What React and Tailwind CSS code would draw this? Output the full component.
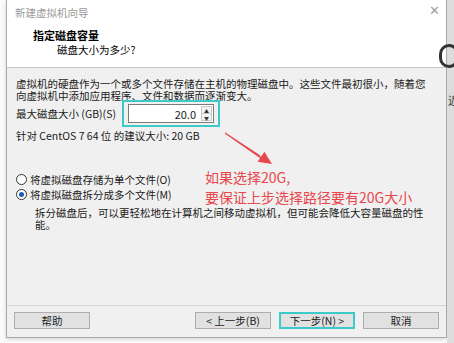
import React from 'react';

const font = { fontFamily: '"Noto Sans CJK SC", "Noto Sans", sans-serif' };

const Radio = ({ checked, label }) => (
  <div className="flex items-center gap-[3px] h-[15px]">
    <span className="w-[11px] h-[11px] rounded-full border border-[#333] bg-white flex items-center justify-center">
      {checked && <span className="w-[5px] h-[5px] rounded-full bg-[#1a5fb4]" />}
    </span>
    <span>{label}</span>
  </div>
);

const Button = ({ children, active }) => (
  <div className={`w-[76px] h-[17px] flex items-center justify-center ${active ? 'border-2 border-[#3cc9c9] bg-[#e1e1e1]' : 'border border-[#adadad] bg-[#e1e1e1]'}`}>
    {children}
  </div>
);

export default function App() {
  return (
    <div className="w-[454px] h-[343px] bg-white flex text-[10.5px] leading-[12px] text-[#1a1a1a] relative overflow-hidden" style={font}>
      <div className="w-[6px] bg-[#fafafa]" />
      <div className="w-[441px] h-[338px] border-x border-b border-[#a9a9a9] flex flex-col shadow-[0_2px_4px_rgba(0,0,0,0.15)]">
        {/* title + header */}
        <div className="h-[68px] bg-white border-b border-[#c8c8c8] relative">
          <div className="absolute left-[8px] top-[7px] text-[#9a9a9a]">新建虚拟机向导</div>
          <div className="absolute right-[6px] top-[4px] text-[#a0a0a0] text-[13px]">✕</div>
          <div className="absolute left-[26px] top-[29px] font-bold text-[11px] text-black">指定磁盘容量</div>
          <div className="absolute left-[50px] top-[44px] text-black">磁盘大小为多少?</div>
        </div>

        {/* body */}
        <div className="flex-1 bg-[#f0f0f0] flex flex-col pl-[9px] pt-[10px] relative">
          <div>虚拟机的硬盘作为一个或多个文件存储在主机的物理磁盘中。这些文件最初很小，随着您</div>
          <div>向虚拟机中添加应用程序、文件和数据而逐渐变大。</div>

          <div className="flex items-center mt-[-2px]">
            <span className="w-[106px]">最大磁盘大小 (GB)(S)</span>
            <div className="border-2 border-[#3cc9c9] px-[4px] py-[2px] bg-[#f0f0f0]">
              <div className="w-[86px] h-[19px] bg-white border border-[#7a7a7a] flex items-center justify-end pr-[1px]">
                <span className="mr-[5px] text-[11px]">20.0</span>
                <div className="w-[11px] h-[15px] flex flex-col border border-[#c8c8c8] bg-[#f3f3f3]">
                  <div className="flex-1 flex items-center justify-center text-[5px] leading-none text-[#333]">▲</div>
                  <div className="flex-1 flex items-center justify-center text-[5px] leading-none text-[#333] border-t border-[#c8c8c8]">▼</div>
                </div>
              </div>
            </div>
          </div>

          <div className="mt-[3px]">针对 CentOS 7 64 位 的建议大小: 20 GB</div>

          <div className="mt-[30px] flex flex-col">
            <Radio label="将虚拟磁盘存储为单个文件(O)" />
            <Radio checked label="将虚拟磁盘拆分成多个文件(M)" />
          </div>
          <div className="ml-[19px] mt-[5px] w-[395px]">
            拆分磁盘后，可以更轻松地在计算机之间移动虚拟机，但可能会降低大容量磁盘的性能。
          </div>

          {/* red annotation */}
          <div className="absolute left-[198px] top-[99px] text-[#e8474b] text-[14px] leading-[20px]">
            <div>如果选择20G,</div>
            <div>要保证上步选择路径要有20G大小</div>
          </div>
          <svg className="absolute left-[208px] top-[61px]" width="70" height="50" viewBox="0 0 70 50">
            <polygon points="10,3.3 10,4.7 47.4,30.7 44.6,26.1" fill="#e8474b" />
            <polygon points="57,35 42.6,32.8 49.4,22.8" fill="#e8474b" />
          </svg>
        </div>

        {/* footer */}
        <div className="h-[32px] bg-[#f0f0f0] border-t border-[#d4d4d4] flex items-center px-[7px] pb-[2px]">
          <Button>帮助</Button>
          <div className="flex-1" />
          <div className="flex gap-[8px]">
            <Button>&lt; 上一步(B)</Button>
            <Button active>下一步(N) &gt;</Button>
            <Button>取消</Button>
          </div>
        </div>
      </div>
      <div className="flex-1 bg-[#dcdcdc] relative">
        <div className="absolute left-[-8px] top-[44px] w-[20px] h-[24px] rounded-full border-[3px] border-[#333]" />
        <div className="absolute left-[1px] top-[94px] text-[11px] text-[#333]">近</div>
      </div>
    </div>
  );
}
